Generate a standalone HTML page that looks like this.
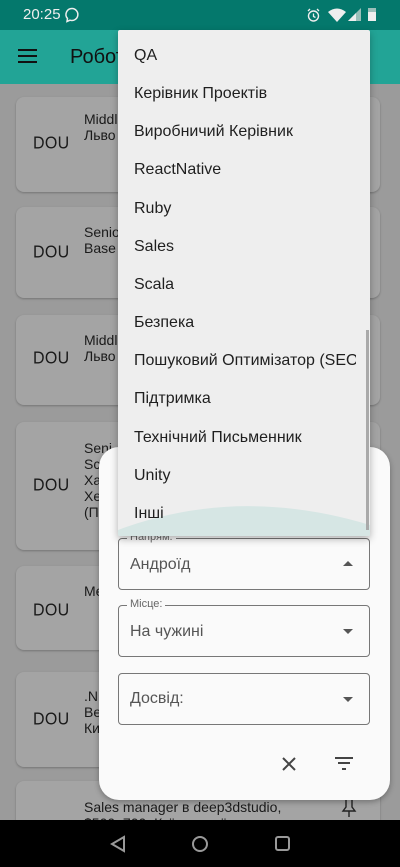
<!DOCTYPE html>
<html><head><meta charset="utf-8"><style>
*{margin:0;padding:0;box-sizing:border-box}
body{width:400px;height:867px;overflow:hidden;background:#9b9b9b;font-family:"Liberation Sans","DejaVu Sans",sans-serif;position:relative}
.abs{position:absolute}
.status{left:0;top:0;width:400px;height:30px;background:#04786c;color:#eee;font-size:15px}
.appbar{left:0;top:30px;width:400px;height:54px;background:#22a496}
.card{position:absolute;left:16px;width:364px;background:#a4a4a4;border-radius:8px;box-shadow:0 1px 2px rgba(0,0,0,.25)}
.dou{position:absolute;left:17px;font-size:16px;color:#1a1a1a;letter-spacing:0.3px;transform:scaleY(1.1)}
.ct{position:absolute;left:68px;font-size:14px;line-height:16px;color:#1a1a1a}
.menu{left:118px;top:30px;width:252px;height:506px;background:#eeeeee;box-shadow:0 3px 8px rgba(0,0,0,.3);overflow:hidden;border-radius:2px}
.mi{position:absolute;left:16px;width:222px;overflow:hidden;font-size:16px;color:#1f1f1f;white-space:nowrap}
.dialog{left:99px;top:447px;width:291px;height:353px;background:#fafafa;border-radius:20px;box-shadow:0 2px 6px rgba(0,0,0,.3)}
.field{position:absolute;left:19px;width:252px;height:52px;border:1px solid #777;border-radius:4px}
.field .v{position:absolute;left:11px;top:17px;font-size:16px;color:#555}
.field .lb{position:absolute;left:8px;top:-8px;font-size:11px;color:#666;background:#fafafa;padding:0 3px}
.tri{position:absolute;right:16px;top:23px;width:0;height:0;border-left:5px solid transparent;border-right:5px solid transparent;border-top:5px solid #555}
.nav{left:0;top:820px;width:400px;height:47px;background:#000}
</style></head><body>
<div class="abs status"><span class="abs" style="left:23px;top:6px">20:25</span>
<svg class="abs" style="left:64px;top:7px" width="16" height="16" viewBox="0 0 16 16"><path d="M8 1.5a6 6 0 0 0-4.5 10l-.5 3 3-1.3A6 6 0 1 0 8 1.5z" fill="none" stroke="#eee" stroke-width="1.5"/></svg>
<svg class="abs" style="left:306px;top:8px" width="15" height="15" viewBox="0 0 15 15"><circle cx="7.5" cy="8" r="5" fill="none" stroke="#eee" stroke-width="1.4"/><path d="M7.5 5.5v3l2 1M2 3l2-2M13 3l-2-2" stroke="#eee" stroke-width="1.3" fill="none"/></svg>
<svg class="abs" style="left:328px;top:8px" width="18" height="14" viewBox="0 0 18 14"><path d="M0 4Q9-3 18 4L9 14z" fill="#eee"/></svg>
<svg class="abs" style="left:348px;top:8px" width="13" height="13" viewBox="0 0 13 13"><path d="M13 0V13H0z" fill="#9bbfb9"/><path d="M8 5V13H0z" fill="#eee"/></svg>
<div class="abs" style="left:368px;top:8px;width:8px;height:13px;background:#eee;border-top:4px solid #9bbfb9"></div>
</div>
<div class="abs appbar">
<div class="abs" style="left:18px;top:19px;width:19px;height:2px;background:#111;box-shadow:0 6px 0 #111,0 12px 0 #111"></div>
<span class="abs" style="left:70px;top:16px;font-size:20px;color:#111">Робот</span>
</div>

<div class="card" style="top:97px;height:95px"><span class="dou" style="top:38px">DOU</span><div class="ct" style="top:14px">Middl<br>Льво</div></div>
<div class="card" style="top:207px;height:91px"><span class="dou" style="top:37px">DOU</span><div class="ct" style="top:17px">Senio<br>Base</div></div>
<div class="card" style="top:315px;height:90px"><span class="dou" style="top:35px">DOU</span><div class="ct" style="top:17px">Middl<br>Льво</div></div>
<div class="card" style="top:422px;height:128px"><span class="dou" style="top:55px">DOU</span><div class="ct" style="top:18px">Seni<br>Sc<br>Xa<br>Xe<br>(П</div></div>
<div class="card" style="top:566px;height:84px"><span class="dou" style="top:36px">DOU</span><div class="ct" style="top:17px">Me</div></div>
<div class="card" style="top:672px;height:95px"><span class="dou" style="top:39px">DOU</span><div class="ct" style="top:16px">.N<br>Be<br>Ки</div></div>
<div class="card" style="top:781px;height:60px"><div class="ct" style="top:18px;white-space:nowrap">Sales manager в deep3dstudio,<br>$500–700, Київ, удалённо</div>
<svg class="abs" style="left:325px;top:17px" width="16" height="20" viewBox="0 0 16 20"><path d="M4 1h8M5 1v8l-3 4h12l-3-4V1M8 13v6" fill="none" stroke="#222" stroke-width="1.4"/></svg></div>

<div class="abs dialog">
<div class="field" style="top:91px"><span class="lb">Напрям:</span><span class="v">Андроїд</span><div class="tri" style="border-top:0;border-bottom:5px solid #555;top:22px"></div></div>
<div class="field" style="top:158px"><span class="lb">Місце:</span><span class="v">На чужині</span><div class="tri"></div></div>
<div class="field" style="top:226px"><span class="v" style="top:16px">Досвід:</span><div class="tri"></div></div>
<svg class="abs" style="left:182px;top:309px" width="16" height="16" viewBox="0 0 16 16"><path d="M2 2L14 14M14 2L2 14" stroke="#444" stroke-width="2"/></svg>
<svg class="abs" style="left:235px;top:310px" width="20" height="14" viewBox="0 0 20 14"><path d="M1 1h18M4 6h12M8 12h4" stroke="#444" stroke-width="2"/></svg>
</div>

<div class="abs menu">
<div class="mi" style="top:17px">QA</div>
<div class="mi" style="top:55px">Керівник Проектів</div>
<div class="mi" style="top:93px">Виробничий Керівник</div>
<div class="mi" style="top:131px">ReactNative</div>
<div class="mi" style="top:170px">Ruby</div>
<div class="mi" style="top:208px">Sales</div>
<div class="mi" style="top:246px">Scala</div>
<div class="mi" style="top:284px">Безпека</div>
<div class="mi" style="top:322px">Пошуковий Оптимізатор (SEO)</div>
<div class="mi" style="top:360px">Підтримка</div>
<div class="mi" style="top:399px">Технічний Письменник</div>
<div class="mi" style="top:437px">Unity</div>
<svg class="abs" style="left:0;top:465px" width="252" height="41"><path d="M0 35Q120 -10 252 30V41H0z" fill="#d6e6e4"/></svg>
<div class="mi" style="top:475px">Інші</div>
<div class="abs" style="left:248px;top:300px;width:3px;height:200px;background:#a9a9a9"></div>
</div>

<div class="abs nav">
<svg class="abs" style="left:110px;top:15px" width="16" height="18" viewBox="0 0 16 18"><path d="M14 2L2 9L14 16z" fill="none" stroke="#999" stroke-width="2"/></svg>
<div class="abs" style="left:192px;top:16px;width:16px;height:16px;border:2px solid #999;border-radius:50%"></div>
<div class="abs" style="left:275px;top:16px;width:15px;height:15px;border:2px solid #999;border-radius:3px"></div>
</div>
</body></html>
